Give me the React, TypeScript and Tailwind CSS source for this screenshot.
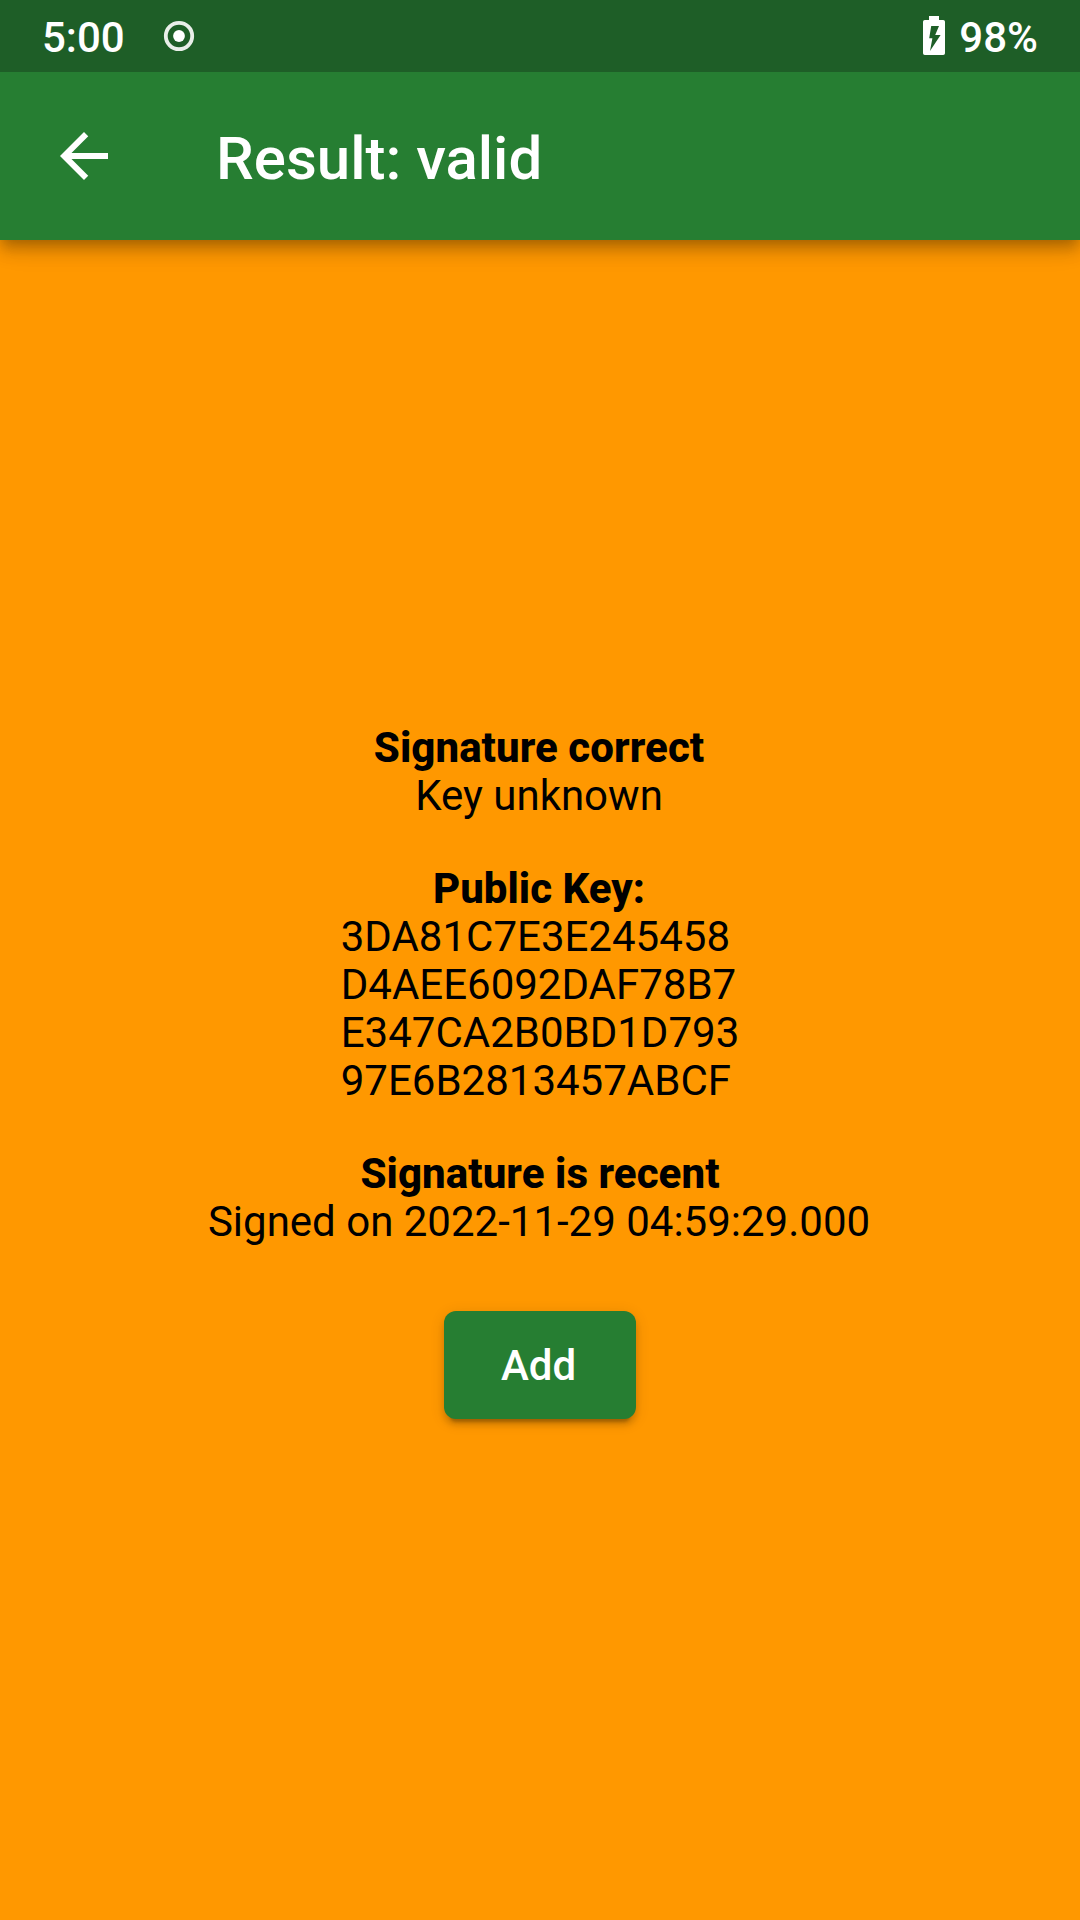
const keyRows = [
  '3DA81C7E3E245458',
  'D4AEE6092DAF78B7',
  'E347CA2B0BD1D793',
  '97E6B2813457ABCF',
];

function RecordIcon() {
  return (
    <svg className="ml-[38px] mt-[20px] block" width="32" height="32" viewBox="0 0 32 32">
      <circle cx="16" cy="16" r="13.2" fill="none" stroke="#e9efe9" strokeWidth="3.8" />
      <circle cx="16" cy="16" r="5.9" fill="#fff" />
    </svg>
  );
}

function BatteryIcon() {
  return (
    <svg className="mt-[16px] block" width="22" height="39" viewBox="0 0 22 39">
      <path
        fill="#fff"
        fillRule="evenodd"
        d="M6 0H16V4H20.2Q22 4 22 5.8V37.2Q22 39 20.2 39H1.8Q0 39 0 37.2V5.8Q0 4 1.8 4H6ZM8.2 10L6.2 22.3H9.4L7 35L17.6 19H12.2L16 10Z"
      />
    </svg>
  );
}

function BackIcon() {
  return (
    <svg className="block" width="72" height="72" viewBox="0 0 24 24" fill="#fff">
      <path d="M20 11H7.83l5.59-5.59L12 4l-8 8 8 8 1.41-1.41L7.83 13H20v-2z" />
    </svg>
  );
}

export default function App() {
  return (
    <div className="flex h-[1920px] w-[1080px] flex-col overflow-hidden bg-[#ff9800] font-[Roboto,sans-serif] text-black">
      <div className="z-10 shrink-0 bg-[#267e32] shadow-[0_6px_12px_-3px_rgba(0,0,0,0.2),0_12px_15px_0_rgba(0,0,0,0.14),0_3px_30px_0_rgba(0,0,0,0.12)]">
        <div className="flex h-[72px] items-start justify-between bg-[#1e5e27] pl-[42px] pr-[42px] text-[42px] font-medium leading-[76px] text-white">
          <div className="flex items-start">
            <span>5:00</span>
            <RecordIcon />
          </div>
          <div className="flex items-start gap-[14px]">
            <BatteryIcon />
            <span>98%</span>
          </div>
        </div>
        <header className="flex h-[168px] items-center pl-[48px] text-white">
          <BackIcon />
          <h1 className="ml-[96px] mt-[5px] text-[60px] font-medium leading-[70px]">Result: valid</h1>
        </header>
      </div>
      <main className="flex flex-1 flex-col items-center justify-center text-[42px] leading-[48px]">
        <p className="pr-[2px] font-extrabold tracking-[0.06px]">Signature correct</p>
        <p className="pr-[2px]">Key unknown</p>
        <p className="mt-[45px] pr-[2px] font-extrabold">Public Key:</p>
        <div>
          {keyRows.map((row) => (
            <p key={row}>{row}</p>
          ))}
        </div>
        <p className="mt-[45px] font-extrabold tracking-[0.06px]">Signature is recent</p>
        <p className="pr-[2px]">Signed on 2022-11-29 04:59:29.000</p>
        <button className="mb-[18px] mt-[65px] h-[108px] w-[192px] rounded-[12px] bg-[#267e32] pr-[3px] pt-[2px] font-medium text-white shadow-[0_9px_3px_-6px_rgba(0,0,0,0.2),0_6px_6px_0_rgba(0,0,0,0.14),0_3px_15px_0_rgba(0,0,0,0.12)]">
          Add
        </button>
      </main>
    </div>
  );
}
